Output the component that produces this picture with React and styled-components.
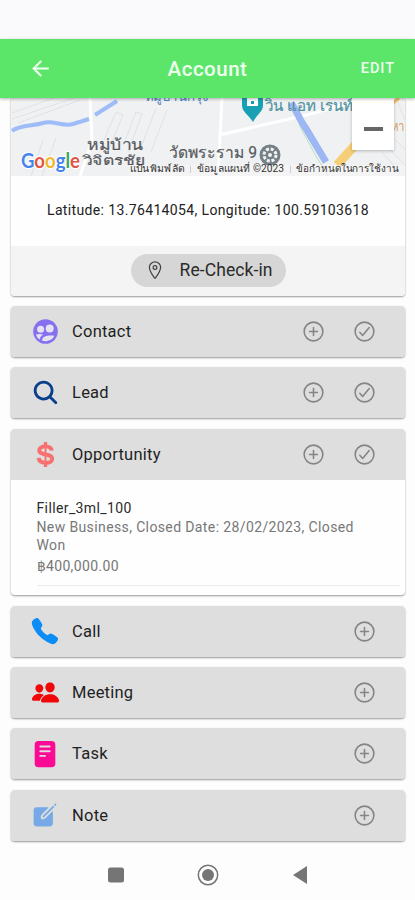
import React from "react";
import styled, { createGlobalStyle } from "styled-components";
import {
  IoSearch,
  IoCall,
  IoPeople,
  IoReader,
  IoCreate,
  IoAddCircleOutline,
  IoCheckmarkCircleOutline,
  IoLocationOutline,
} from "react-icons/io5";
import { MdArrowBack } from "react-icons/md";

const ContactIcon = ({ size }) => (
  <svg width={size} height={size} viewBox="0 0 25 25" fill="currentColor">
    <circle cx="12.500" cy="12.500" r="12.300" />
    <g fill="#e6e3f0">
      <circle cx="7.600" cy="10.300" r="3.500" />
      <circle cx="16.700" cy="9.500" r="4" />
      <path d="M3 15.500c2-.7 5-.8 7.200 0-2 1.200-3.200 2.700-3.400 5C4.800 19.200 3.500 17.500 3 15.500z" />
      <path d="M9 21.600c.2-3.600 4-5.600 12.300-4.900-1.700 4.200-7.600 6.700-12.300 4.900z" />
    </g>
  </svg>
);

const DollarIcon = ({ size }) => (
  <svg width={size} height={size} viewBox="0 0 24 24" fill="none" stroke="currentColor">
    <path d="M18 8.300C17.700 5.500 15.300 4.200 12 4.200c-3.500 0-5.900 1.400-5.900 3.900 0 5.400 12.300 2.300 12.300 7.900 0 2.600-2.600 4-6.400 4-3.700 0-6.300-1.500-6.500-4.700" strokeWidth="3.800" />
    <path d="M12 0v5M12 19v5" strokeWidth="3.200" />
    <path d="M12 5v14" strokeWidth="1.800" />
  </svg>
);

const sections = [
  { title: "Contact", icon: ContactIcon, color: "#8670f0", size: 25, check: true },
  { title: "Lead", icon: IoSearch, color: "#0b3f8c", size: 29, check: true },
  {
    title: "Opportunity",
    icon: DollarIcon,
    color: "#f87171",
    size: 25,
    check: true,
    item: {
      name: "Filler_3ml_100",
      detail: "New Business, Closed Date: 28/02/2023, Closed Won",
      amount: "฿400,000.00",
    },
  },
  { title: "Call", icon: IoCall, color: "#0b8df5", size: 30 },
  { title: "Meeting", icon: IoPeople, color: "#f00808", size: 29 },
  { title: "Task", icon: IoReader, color: "#fb0a96", size: 30 },
  { title: "Note", icon: IoCreate, color: "#76a9e6", size: 28 },
];

const MapView = () => (
  <MapArt viewBox="11 98 394 78" width="394" height="78">
    <rect x="11" y="98" width="394" height="78" fill="#f0f1f2" />
    <g fill="none" stroke="#dfe1e4" strokeWidth="1">
      <path d="M12 113L54 98M12 119L74 98M18 123l62-23M31 176l12-36M42 176l14-38M104 140l12-28 7 3-14 34M123 146l13-34 6 2-14 38M140 150l16-42M151 152l16-42M390 135l15 14M384 143l21 22M383 153l18 21M396 98l9 22" />
    </g>
    <g fill="none" stroke="#fff" strokeWidth="3">
      <path d="M90 98l2 43-12 35M222 98l-4 78M219 135l88-20 60-17" />
    </g>
    <path d="M12 131c7-6 21-5 31-8s20 4 30 1 10-3 16-5M95 115l22-14" fill="none" stroke="#9ebdf8" strokeWidth="4" />
    <path d="M291 103c6 8 8 16 14 24l21 35" fill="none" stroke="#9db7f5" strokeWidth="7" />
    <path d="M299 125l17 31 12 20" fill="none" stroke="#b8ddc0" strokeWidth="1" />
    <path d="M337 165l20-22" fill="none" stroke="#f6ce75" strokeWidth="9" />
    <path d="M393 103l6-5" fill="none" stroke="#f2bc67" strokeWidth="3" />

    <text x="145" y="101" fontSize="14" fill="#557fc4" textLength="64" lengthAdjust="spacingAndGlyphs">หมู่บ้านกรุง</text>
    <text x="265" y="111" fontSize="15" fill="#4f929e" stroke="#4f929e" strokeWidth="0.2" textLength="88" lengthAdjust="spacingAndGlyphs">วิน แอท เรนท์</text>
    <text x="391" y="131" fontSize="14" fill="#d9a064" textLength="14" lengthAdjust="spacingAndGlyphs">หา</text>
    <g fill="#565a5e" stroke="#565a5e" strokeWidth="0.2">
      <text x="87" y="150" fontSize="15" textLength="56" lengthAdjust="spacingAndGlyphs">หมู่บ้าน</text>
      <text x="83" y="165" fontSize="13" textLength="63" lengthAdjust="spacingAndGlyphs">วิจิตรชัย</text>
      <text x="169" y="158" fontSize="16" textLength="88" lengthAdjust="spacingAndGlyphs">วัดพระราม 9</text>
    </g>

    <path d="M242 98h21v7c0 7-6 9-10 17-5-8-11-10-11-17z" fill="#19a0b4" />
    <path d="M247 98h11v8h-11z" fill="#fff" />
    <path d="M251 101h3v3h-3z" fill="#19a0b4" />

    <circle cx="270" cy="155" r="10.5" fill="#758087" />
    <circle cx="270" cy="155" r="6" fill="none" stroke="#f3f4f5" strokeWidth="3" strokeDasharray="3 1.7" />
    <circle cx="270" cy="155" r="2" fill="#f3f4f5" />

    <text x="21" y="168" fontFamily="Lato, sans-serif" fontSize="20" fontWeight="700" textLength="59" lengthAdjust="spacingAndGlyphs" stroke="#fff" strokeWidth="2" paintOrder="stroke">
      <tspan fill="#4584ee">G</tspan>
      <tspan fill="#e35345">o</tspan>
      <tspan fill="#f0b72b">o</tspan>
      <tspan fill="#4584ee">g</tspan>
      <tspan fill="#3fa65a">l</tspan>
      <tspan fill="#e35345">e</tspan>
    </text>

    <rect x="130" y="165" width="275" height="11" fill="#f5f5f5" opacity="0.7" />
    <g fontSize="10" fill="#333">
      <text x="130" y="172" textLength="54" lengthAdjust="spacingAndGlyphs">แป้นพิมพ์ลัด</text>
      <text x="197" y="172" textLength="87" lengthAdjust="spacingAndGlyphs">ข้อมูลแผนที่ ©2023</text>
      <text x="296" y="172" textLength="103" lengthAdjust="spacingAndGlyphs">ข้อกำหนดในการใช้งาน</text>
    </g>
    <path d="M190.500 166v7M290.500 166v7" stroke="#c9ccd2" />
  </MapArt>
);

const Section = ({ section }) => {
  const { title, icon: Icon, color, size, check, item } = section;

  return (
    <Card>
      <SectionHead>
        <IconSlot $color={color}>
          <Icon size={size} />
        </IconSlot>
        <SectionTitle>{title}</SectionTitle>
        <Actions>
          <IoAddCircleOutline />
          {check && <IoCheckmarkCircleOutline />}
        </Actions>
      </SectionHead>

      {item && (
        <Item>
          <ItemName>{item.name}</ItemName>
          <ItemDetail>{item.detail}</ItemDetail>
          <ItemAmount>{item.amount}</ItemAmount>
        </Item>
      )}
    </Card>
  );
};

const App = () => (
  <Screen>
    <GlobalStyle />
    <StatusBar />
    <Header>
      <BackButton aria-label="Back">
        <MdArrowBack />
      </BackButton>
      <HeaderTitle>Account</HeaderTitle>
      <EditButton>EDIT</EditButton>
    </Header>

    <Content>
      <LocationCard>
        <MapBox>
          <MapView />
          <ZoomOut aria-label="Zoom out" />
        </MapBox>
        <Coordinates>
          <span>Latitude: 13.76414054, Longitude: 100.59103618</span>
        </Coordinates>
        <CardFooter>
          <CheckInButton>
            <IoLocationOutline size={20} />
            <CheckInLabel>Re-Check-in</CheckInLabel>
          </CheckInButton>
        </CardFooter>
      </LocationCard>

      {sections.map((section) => (
        <Section key={section.title} section={section} />
      ))}
    </Content>

    <NavBar>
      <svg width="200" height="24" viewBox="0 0 200 24" fill="#757575">
        <rect x="0" y="4.500" width="16" height="15" rx="2.500" />
        <circle cx="100" cy="12" r="9.700" fill="none" stroke="#757575" strokeWidth="1.500" />
        <circle cx="100" cy="12" r="6" />
        <path d="M185 12l14-9v18z" />
      </svg>
    </NavBar>
  </Screen>
);

export default App;

/* ================= STYLES ================= */

const GlobalStyle = createGlobalStyle`
  * {
    box-sizing: border-box;
  }

  body {
    margin: 0;
    background: #fdfdfd;
    font-family: Roboto, "Noto Sans", sans-serif;
  }

  button {
    border: 0;
    padding: 0;
    background: none;
    font: inherit;
  }
`;

const Screen = styled.div`
  display: flex;
  flex-direction: column;
  height: 900px;
  overflow: hidden;
`;

const StatusBar = styled.div`
  flex: none;
  height: 39px;
  background: #fafafc;
`;

const Header = styled.header`
  display: grid;
  grid-template-columns: 80px 1fr 80px;
  align-items: center;
  flex: none;
  height: 59px;
  background: #5be66a;
  color: #effff0;
  box-shadow: 0 1px 3px rgba(0, 0, 0, 0.3);
  z-index: 1;
`;

const BackButton = styled.button`
  display: flex;
  margin-left: 28px;
  color: inherit;
  font-size: 25px;
`;

const HeaderTitle = styled.h1`
  margin: 0;
  font-size: 20.500px;
  font-weight: 500;
  letter-spacing: 0.5px;
  text-align: center;
`;

const EditButton = styled.button`
  margin-right: 20px;
  color: inherit;
  font-size: 14.5px;
  font-weight: 500;
  letter-spacing: 0.95px;
  text-align: right;
`;

const Content = styled.main`
  display: flex;
  flex-direction: column;
  gap: 10.4px;
  flex: 1;
  padding: 0 10px 0 11px;
`;

const Card = styled.section`
  flex: none;
  border-radius: 4px;
  overflow: hidden;
  background: #fefefe;
  box-shadow: 0 1px 2px rgba(0, 0, 0, 0.4);
`;

const LocationCard = styled(Card)`
  height: 197.500px;
  border-radius: 0 0 4px 4px;
`;

const MapBox = styled.div`
  position: relative;
  height: 78px;
`;

const MapArt = styled.svg`
  display: block;
`;

const ZoomOut = styled.button`
  display: flex;
  align-items: center;
  justify-content: center;
  position: absolute;
  top: 0;
  right: 11px;
  width: 42px;
  height: 52px;
  padding-top: 10px;
  background: #fff;
  box-shadow: 0 1px 3px rgba(0, 0, 0, 0.25);

  &::before {
    content: "";
    width: 19px;
    height: 4px;
    background: #666;
  }
`;

const Coordinates = styled.div`
  display: flex;
  align-items: center;
  justify-content: center;
  height: 69.500px;
  padding-bottom: 2px;
  color: #222;
  font-size: 14px;
  letter-spacing: 0.36px;
`;

const CardFooter = styled.div`
  display: flex;
  justify-content: center;
  height: 50px;
  padding-top: 8px;
  background: #f4f4f4;
`;

const CheckInButton = styled.button`
  display: flex;
  align-items: center;
  gap: 15px;
  width: 155px;
  height: 33px;
  padding-left: 14px;
  border-radius: 17px;
  background: #d6d6d6;
  color: #444;
`;

const CheckInLabel = styled.span`
  color: #2b2b2b;
  font-size: 17.500px;
  letter-spacing: 0.1px;
`;

const SectionHead = styled.div`
  display: flex;
  align-items: center;
  height: 51px;
  padding: 0 28px 0 18px;
  background: #dedede;
`;

const IconSlot = styled.span`
  display: flex;
  justify-content: center;
  width: 32px;
  color: ${({ $color }) => $color};
`;

const SectionTitle = styled.h2`
  margin: 0 0 0 11px;
  color: #1f1f1f;
  font-size: 16.500px;
  font-weight: 400;
  letter-spacing: 0.24px;
`;

const Actions = styled.div`
  display: flex;
  gap: 26px;
  margin-left: auto;
  color: #858585;
  font-size: 25px;
`;

const Item = styled.div`
  height: 115.600px;
  padding: 18px 5px 0 25.500px;
  color: #777;
  font-size: 14px;
  letter-spacing: 0.38px;
`;

const ItemName = styled.div`
  color: #2c2c2c;
  line-height: 20px;
`;

const ItemDetail = styled.div`
  max-width: 330px;
  line-height: 18px;
`;

const ItemAmount = styled.div`
  height: 32.500px;
  padding-top: 3.500px;
  border-bottom: 1px solid #ececec;
  line-height: 18px;
`;

const NavBar = styled.nav`
  display: flex;
  justify-content: center;
  flex: none;
  height: 37px;
`;
